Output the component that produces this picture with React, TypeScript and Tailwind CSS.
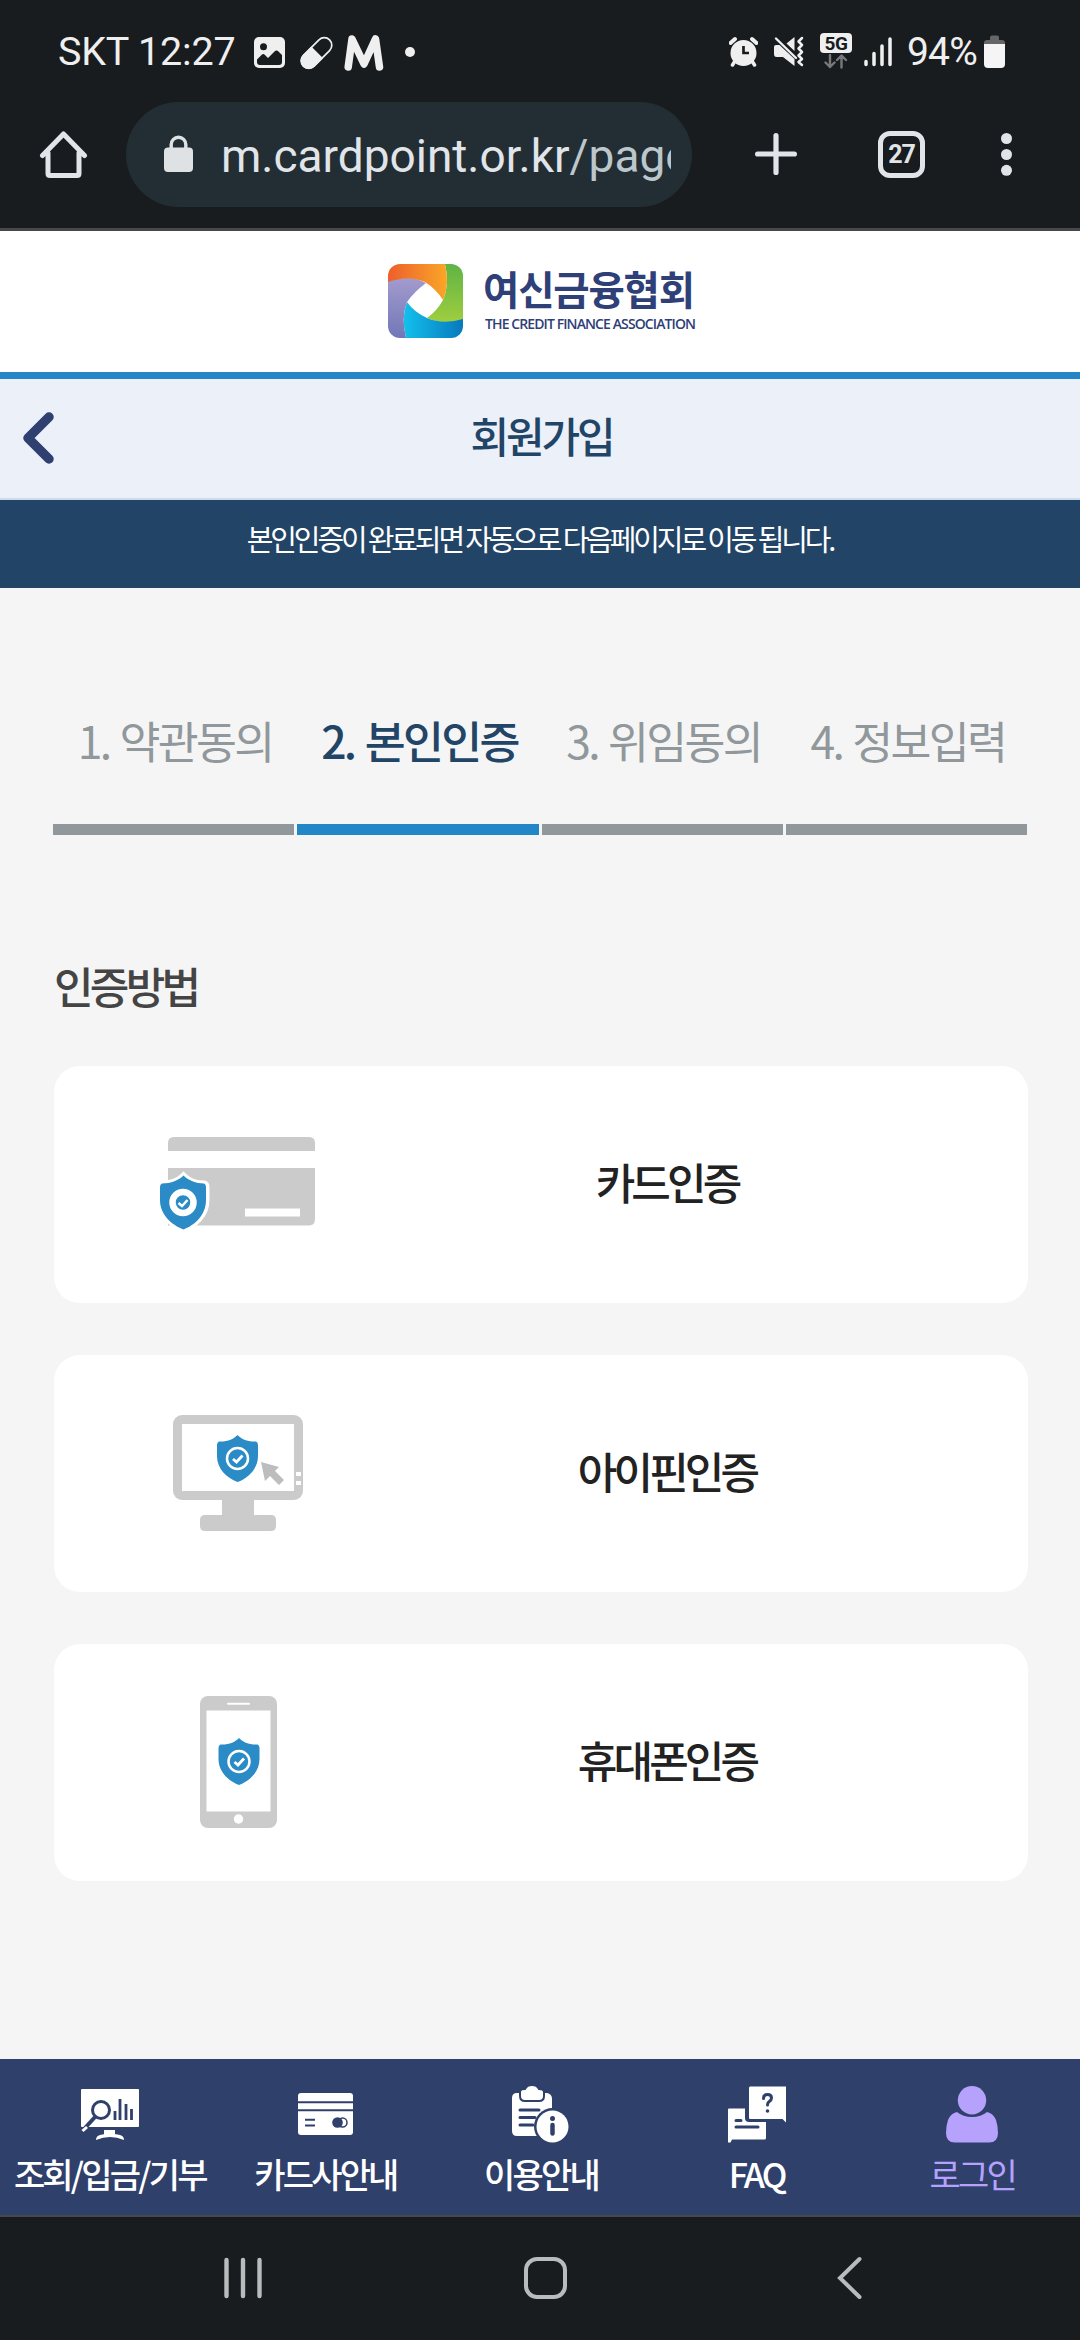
import React from "react";

const steps = [
  { label: "1. 약관동의", active: false },
  { label: "2. 본인인증", active: true },
  { label: "3. 위임동의", active: false },
  { label: "4. 정보입력", active: false },
];

const methods = [
  { label: "카드인증", Icon: CardIcon },
  { label: "아이핀인증", Icon: MonitorIcon },
  { label: "휴대폰인증", Icon: PhoneIcon },
];

const tabs = [
  { label: "조회/입금/기부", Icon: SearchTabIcon, active: false },
  { label: "카드사안내", Icon: CardTabIcon, active: false },
  { label: "이용안내", Icon: GuideTabIcon, active: false },
  { label: "FAQ", Icon: FaqTabIcon, active: false },
  { label: "로그인", Icon: UserTabIcon, active: true },
];

function StatusBar() {
  return (
    <div className="h-[102px] flex items-start pl-[58px] pr-[75px] text-[#efefef]">
      <span className="mt-[29px] w-[180px] whitespace-nowrap text-[39.5px] leading-[46px] tracking-[-0.2px]">SKT 12:27</span>
      <svg className="ml-[16px] mt-[37px]" width="31" height="31" viewBox="0 0 31 31">
        <rect width="31" height="31" rx="5" fill="#efefef" />
        <circle cx="9.5" cy="9.7" r="3.5" fill="#191c1f" />
        <path d="M3 22.5L8 17.5Q9.500 16.500 11 18L14 21L20.500 14.500Q22.500 12.500 24.500 14.500L28 18V25Q28 28 25 28H6Q3 28 3 25Z" fill="#191c1f" />
      </svg>
      <svg className="ml-[15px] mt-[36px]" width="33" height="34" viewBox="0 0 33 34">
        <g transform="rotate(45 16.5 17)">
          <rect x="9" y="-1.500" width="15" height="37" rx="7.500" fill="none" stroke="#efefef" strokeWidth="1.700" />
          <path d="M8.200 16H24.800V28A8.300 8.300 0 0 1 8.200 28Z" fill="#efefef" />
        </g>
      </svg>
      <svg className="ml-[11px] mt-[34px]" width="40" height="37" viewBox="0 0 40 37">
        <path d="M4.200 33L8 5L20 30L31.500 5L35.500 33" fill="none" stroke="#efefef" strokeWidth="7.500" strokeLinecap="round" strokeLinejoin="round" />
      </svg>
      <span className="ml-[21px] mt-[47px] size-[10px] rounded-full bg-[#efefef]" />

      <svg className="ml-auto mt-[36px]" width="29" height="31" viewBox="0 0 29 31" fill="none" stroke="#efefef">
        <circle cx="14.500" cy="17" r="13" fill="#efefef" stroke="none" />
        <path d="M1.500 7L6 3M27.500 7L23 3" strokeWidth="4" strokeLinecap="round" />
        <path d="M6 25L3.500 29M23 25L25.500 29" strokeWidth="3.500" strokeLinecap="round" />
        <path d="M14.500 10V17H20" stroke="#191c1f" strokeWidth="2.700" />
      </svg>
      <svg className="ml-[16px] mt-[36px]" width="30" height="31" viewBox="0 0 30 31">
        <path d="M20.500 1V15L12.500 7.500ZM0 11Q0 9 2 9H5.500L20.500 23V30L9 21H2.500Q0 21 0 18Z" fill="#efefef" />
        <path d="M2 2.500L22 22" stroke="#efefef" strokeWidth="2.400" strokeLinecap="round" />
        <path d="M28 2L24.500 5.500L28 9L24.500 12.500L28 16L24.500 19.500L28 23L24.500 26L28 29" fill="none" stroke="#efefef" strokeWidth="2.500" strokeLinecap="round" strokeLinejoin="round" />
      </svg>
      <div className="ml-[16px] mt-[33px] flex flex-col items-center">
        <span className="h-[20px] w-[32px] rounded-[4px] bg-[#efefef] text-center text-[19px] font-bold leading-[21px] tracking-[-0.5px] text-[#191c1f]">5G</span>
        <svg className="mt-px" width="24" height="15" viewBox="0 0 24 15" fill="none" stroke="#77797b" strokeWidth="2.400" strokeLinecap="round" strokeLinejoin="round">
          <path d="M6 1V13M1.500 8.500L6 13L10.500 8.500M17.500 13.500V2M13 6L17.500 1.500L22 6" />
        </svg>
      </div>
      <svg className="ml-[12px] mt-[36px]" width="28" height="31" viewBox="0 0 28 31" stroke="#efefef" strokeWidth="3.500" strokeLinecap="round">
        <path d="M2 25.500V28.500M10 17.500V28.500M18 10V28.500M26 3V28.500" />
      </svg>
      <span className="ml-[15px] mt-[29px] w-[72px] whitespace-nowrap text-[39px] leading-[46px] tracking-[-0.800px]">94%</span>
      <svg className="ml-[5px] mt-[35px]" width="21" height="33" viewBox="0 0 21 33">
        <path d="M0 9V8Q0 5 3 5H6V2.500Q6 .5 8 .5H13Q15 .5 15 2.500V5H18Q21 5 21 8V9Z" fill="#646668" />
        <path d="M0 9H21V29Q21 33 17 33H4Q0 33 0 29Z" fill="#f5f5f5" />
      </svg>
    </div>
  );
}

function AddressBar() {
  return (
    <div className="h-[129px] flex items-start border-b-[3px] border-[#47484b] text-[#e1e5e9]">
      <svg className="ml-[39px] mt-[28px] shrink-0" width="49" height="49" viewBox="0 0 49 49" fill="none" stroke="#e1e5e9" strokeWidth="5" strokeLinecap="round" strokeLinejoin="round">
        <path d="M3.500 25.500L24.500 4L45.500 25.500M9 23V43.500Q9 45.500 11 45.500H38Q40 45.500 40 43.500V23" />
      </svg>
      <div className="ml-[38px] h-[105px] w-[566px] rounded-full bg-[#222e33] flex items-start shrink-0">
        <svg className="ml-[38px] mt-[33px] shrink-0" width="29" height="37" viewBox="0 0 29 37">
          <rect y="12.500" width="29" height="24.500" rx="4" fill="#dfe2e4" />
          <path d="M7.200 14V9.500A7.300 7.300 0 0 1 21.800 9.500V14" fill="none" stroke="#dfe2e4" strokeWidth="3.400" />
        </svg>
        <span className="ml-[28px] mt-[25px] h-[64px] w-[450px] overflow-hidden whitespace-nowrap text-[46px] leading-[58px]">
          m.cardpoint.or.kr<span className="text-[#bcc7cd]">/page</span>
        </span>
      </div>
      <svg className="ml-[63px] mt-[31px] shrink-0" width="42" height="42" viewBox="0 0 42 42" stroke="#e1e5e9" strokeWidth="5.200" strokeLinecap="round">
        <path d="M21 2.600V39.400M2.600 21H39.400" />
      </svg>
      <span className="ml-[81px] mt-[29px] h-[47px] w-[47px] shrink-0 rounded-[12px] border-[5px] border-[#e1e5e9] text-center text-[25px] font-bold leading-[37px] tracking-[-1px]">27</span>
      <svg className="ml-[76px] mt-[31px] shrink-0" width="11" height="43" viewBox="0 0 11 43" fill="#e1e5e9">
        <circle cx="5.500" cy="5.500" r="5.500" />
        <circle cx="5.500" cy="21.500" r="5.500" />
        <circle cx="5.500" cy="37.300" r="5.500" />
      </svg>
    </div>
  );
}

function Logo() {
  return (
    <div className="h-[148px] bg-white border-b-[7px] border-[#2387c7] flex items-start">
      <svg className="ml-[388px] mt-[33px] shrink-0" width="75" height="74" viewBox="0 0 75 74">
        <defs>
          <linearGradient id="orange" x1="0" x2="1"><stop stopColor="#ed5f2c" /><stop offset="1" stopColor="#faa628" /></linearGradient>
          <linearGradient id="green" x1="0" y1="0" x2="0" y2="1"><stop stopColor="#5eb445" /><stop offset="1" stopColor="#a0ce3e" /></linearGradient>
          <linearGradient id="cyan" x1="0" x2="1"><stop stopColor="#13c0ec" /><stop offset="1" stopColor="#0779bd" /></linearGradient>
          <linearGradient id="violet" x1="0" y1="0" x2="0" y2="1"><stop stopColor="#a39bce" /><stop offset="1" stopColor="#7177b7" /></linearGradient>
          <clipPath id="mark"><rect width="75" height="74" rx="12" /></clipPath>
        </defs>
        <g clipPath="url(#mark)">
          <rect width="75" height="74" fill="#fff" />
          <path d="M57 0H75V56Q57 62 39 54Q49 47 55 36Q62 20 57 0Z" fill="url(#green)" />
          <path d="M18 74Q13 53 19 38Q26 48 39 54Q55 61 75 55V74Z" fill="url(#cyan)" />
          <path d="M0 17Q22 10 38 19Q26 28 19 38Q13 53 18 74H0Z" fill="url(#violet)" />
          <path d="M0 0H57Q62 20 55 36Q48 25 37 18Q20 11 0 18Z" fill="url(#orange)" />
        </g>
      </svg>
      <div className="ml-[20px] mt-[33px] flex flex-col whitespace-nowrap text-[#2f4078]">
        <span className="font-['Noto_Sans_CJK_KR',sans-serif] text-[39.500px] font-bold leading-[48px] tracking-[-1.200px]">여신금융협회</span>
        <span className="ml-[2px] mt-[3px] font-['Open_Sans',sans-serif] text-[14px] font-semibold leading-[18px] tracking-[-0.900px]">THE CREDIT FINANCE ASSOCIATION</span>
      </div>
    </div>
  );
}

function ShieldBadge() {
  return (
    <>
      <path d="M20.500 0C24 4 31 7 39 6.500Q41 7 41 10V21C41 34 31 43 20.500 47C10 43 0 34 0 21V10Q0 7 2 6.500C10 7 17 4 20.500 0Z" fill="#2a8bc7" />
      <circle cx="20.500" cy="23.500" r="10.500" fill="none" stroke="#fff" strokeWidth="2.500" />
      <path d="M16 24L19.500 27L25.500 20.500" fill="none" stroke="#fff" strokeWidth="2.800" />
    </>
  );
}

function CardIcon() {
  return (
    <svg className="-mt-[2px]" width="156" height="93" viewBox="0 0 156 93">
      <path d="M8 14V6Q8 0 14 0H149Q155 0 155 6V14ZM8 31H155V82Q155 88.500 149 88.500H8Z" fill="#cbcbcb" />
      <rect x="85" y="71.500" width="55" height="8" fill="#fff" />
      <path d="M23.500 38.500C28 43 36 46.500 44 46.500Q46.500 47 46.500 50V63C46.500 78 35 88 23.500 92.500C12 88 0 78 0 63V50Q0 47 2 46.500C11 46.500 19 43 23.500 38.500Z" fill="#fff" stroke="#fff" strokeWidth="6" />
      <path d="M23.500 38.500C28 43 36 46.500 44 46.500Q46 47 46 50V63C46 78 35 88 23.500 92.500C12 88 0 78 0 63V50Q0 47 2 46.500C11 46.500 19 43 23.500 38.500Z" fill="#2a8bc7" />
      <circle cx="23" cy="65.500" r="10.500" fill="none" stroke="#fff" strokeWidth="6.500" />
      <path d="M18.500 66L22 69L27.500 63" fill="none" stroke="#fff" strokeWidth="2.500" />
    </svg>
  );
}

function MonitorIcon() {
  return (
    <svg width="130" height="116" viewBox="0 0 130 116">
      <rect width="130" height="85" rx="9" fill="#cbcbcb" />
      <rect x="9" y="9" width="112" height="67" fill="#fff" />
      <path d="M49 84H81V100H98Q103 100 103 105V111Q103 116 98 116H32Q27 116 27 111V105Q27 100 32 100H49Z" fill="#cbcbcb" />
      <path d="M123 57h5v4h-5zM123 66h5v4h-5z" fill="#fff" />
      <path d="M88 47L106 52L102 56L111 65L106 70L97 61L92 66Z" fill="#bdbdbd" />
      <g transform="translate(44 20)"><ShieldBadge /></g>
    </svg>
  );
}

function PhoneIcon() {
  return (
    <svg width="77" height="132" viewBox="0 0 77 132">
      <rect width="77" height="132" rx="8" fill="#cbcbcb" />
      <rect x="6.500" y="14.500" width="64" height="101" fill="#fff" />
      <path d="M28 7.700H49" stroke="#fff" strokeWidth="2" strokeLinecap="round" />
      <circle cx="38.500" cy="123" r="4.700" fill="#fff" />
      <g transform="translate(18.500 42)"><ShieldBadge /></g>
    </svg>
  );
}

function SearchTabIcon() {
  return (
    <svg width="58" height="51" viewBox="0 0 58 51">
      <rect width="58" height="38" rx="1" fill="#fff" />
      <path d="M23 41H34V46H23ZM15 51Q15 47 19 46Q29 43 39 46Q43 47 43 51Q29 45 15 51Z" fill="#fff" />
      <circle cx="20" cy="21" r="8.500" fill="none" stroke="#2f406b" strokeWidth="3" />
      <path d="M14 28L4 39" stroke="#2f406b" strokeWidth="4" />
      <path d="M6 38L1.500 42" stroke="#fff" strokeWidth="3" />
      <path d="M34 22V31M39 10V31M45 15V31M50.500 20V31" stroke="#2f406b" strokeWidth="2.800" />
    </svg>
  );
}

function CardTabIcon() {
  return (
    <svg width="55" height="42" viewBox="0 0 55 42">
      <rect width="55" height="42" rx="3" fill="#fff" />
      <path d="M0 9.300H55M0 17.300H55M7 26.700H17M7 32.500H17" stroke="#2f406b" strokeWidth="2" />
      <circle cx="39.500" cy="29.500" r="5.300" fill="#2f406b" />
      <circle cx="44.500" cy="29.500" r="4.500" fill="none" stroke="#2f406b" strokeWidth="1.500" />
    </svg>
  );
}

function GuideTabIcon() {
  return (
    <svg width="57" height="58" viewBox="0 0 57 58">
      <path d="M5 8H35Q40 9 40 14V28L30 51H5Q0 51 0 46V13Q0 8 5 8Z" fill="#fff" />
      <path d="M8 6Q9 4 13 4Q15 0 20 0Q25 0 27 4Q32 4 32 7V11Q32 16 27 16H13Q8 16 8 11Z" fill="#fff" stroke="#2f406b" strokeWidth="2" />
      <path d="M8 25H27M8 32.500H23M8 40H21" stroke="#2f406b" strokeWidth="3" strokeLinecap="round" />
      <circle cx="40.500" cy="41.500" r="18.500" fill="#2f406b" />
      <circle cx="40.500" cy="41.500" r="16" fill="#fff" />
      <circle cx="40.500" cy="33.500" r="2.500" fill="#2f406b" />
      <path d="M40.500 40V48.500" stroke="#2f406b" strokeWidth="4.500" strokeLinecap="round" />
    </svg>
  );
}

function FaqTabIcon() {
  return (
    <svg width="58" height="57" viewBox="0 0 58 57">
      <path d="M0 23.500Q0 22.500 1 22.500H17V32Q17 36 21 36H38V52Q38 53.500 36.500 53.500H4L2.500 56.500H0Z" fill="#fff" />
      <path d="M8 34.500H13M8 41H30" stroke="#2f406b" strokeWidth="3" strokeLinecap="round" />
      <path d="M22 .5H58V36.500L54.500 33H22Q21 33 21 32V1.500Z" fill="#fff" />
      <path d="M35.500 12.500Q35.500 8.500 39.500 8.500Q43.500 8.500 43.500 12Q43.500 14 41 15.700Q39.500 17 39.500 19" fill="none" stroke="#2f406b" strokeWidth="3" strokeLinecap="round" />
      <circle cx="39.500" cy="25" r="1.800" fill="#2f406b" />
    </svg>
  );
}

function UserTabIcon() {
  return (
    <svg width="52" height="57" viewBox="0 0 52 57" fill="#b6a1fd">
      <circle cx="26" cy="14.200" r="14.200" />
      <path d="M11 26Q17 31 26 31Q35 31 41 26Q47 27 50 34Q52 40 52 47Q52 56.500 43 56.500H9Q0 56.500 0 47Q0 40 2 34Q5 27 11 26Z" />
    </svg>
  );
}

export default function App() {
  return (
    <div className="flex h-[2340px] w-[1080px] flex-col overflow-hidden bg-[#f5f5f5] font-['Noto_Sans_CJK_KR',sans-serif]">
      <header className="bg-[#191c1f] font-[Roboto,sans-serif]">
        <StatusBar />
        <AddressBar />
      </header>
      <Logo />

      {/* page title */}
      <div className="grid h-[121px] grid-cols-3 items-center border-b-2 border-[#cbdbe9] bg-[#ebf0f9]">
        <svg className="ml-[21px] mt-[-1px]" width="35" height="54" viewBox="0 0 35 54" fill="none" stroke="#2f4070" strokeWidth="9.500" strokeLinecap="round" strokeLinejoin="round">
          <path d="M28 6L7 27L28 48" />
        </svg>
        <h1 className="pb-[7px] pl-[3px] text-center text-[42px] leading-[60px] tracking-[-3.200px] text-[#224466] font-medium">회원가입</h1>
      </div>
      <p className="h-[88px] whitespace-nowrap bg-[#224466] text-center text-[29px] leading-[77px] tracking-[-3.150px] text-white">
        본인인증이 완료되면 자동으로 다음페이지로 이동 됩니다.
      </p>

      <main className="flex-1 px-[54px]">
        <ol className="-mx-px grid grid-cols-4 gap-[3px] pt-[122px]">
          {steps.map((s) => (
            <li
              key={s.label}
              className={`h-[125px] whitespace-nowrap border-b-[11px] pl-[3px] text-center text-[44.500px] leading-[60px] tracking-[-2.700px] [word-spacing:3px] ${
                s.active ? "border-[#2387c7] text-[#224466] font-medium" : "border-[#91989c] text-[#91989c]"
              }`}
            >
              {s.label}
            </li>
          ))}
        </ol>

        <h2 className="mt-[120px] text-[43px] leading-[60px] tracking-[-3.700px] text-[#444] font-medium">인증방법</h2>
        <ul className="mt-[51px] flex flex-col gap-[52.500px]">
          {methods.map(({ label, Icon }) => (
            <li key={label} className="flex h-[236.500px] w-[974px] items-center rounded-[26px] bg-white">
              <div className="flex w-[368px] justify-center">
                <Icon />
              </div>
              <span className="w-[490px] pb-[7px] text-center text-[43px] leading-[60px] tracking-[-3.900px] text-[#222] font-medium">{label}</span>
            </li>
          ))}
        </ul>
      </main>

      <nav className="grid h-[158px] grid-cols-5 border-b-2 border-[#47484b] bg-[#2f406b] pl-[2px]">
        {tabs.map(({ label, Icon, active }) => (
          <a
            key={label}
            className={`flex flex-col items-center whitespace-nowrap text-[34px] leading-[44px] tracking-[-2.800px] ${
              active ? "text-[#b6a1fd]" : "text-white font-medium"
            }`}
          >
            <span className="mt-[26px] mb-[9px] flex h-[58px] items-center">
              <Icon />
            </span>
            {label}
          </a>
        ))}
      </nav>

      {/* system navigation */}
      <div className="flex h-[123px] items-start bg-[#191c1f] pt-[38px] pl-[223px]">
        <svg width="40" height="46" viewBox="0 0 40 46" stroke="#b9bbbd" strokeWidth="4.400" strokeLinecap="round">
          <path d="M3.500 5V41M20 5V41M36.500 5V41" />
        </svg>
        <span className="ml-[261px] mt-[2px] h-[42px] w-[43px] rounded-[13px] border-[4px] border-[#b9bbbd]" />
        <svg className="ml-[270px]" width="28" height="46" viewBox="0 0 28 46" fill="none" stroke="#b9bbbd" strokeWidth="4" strokeLinecap="round">
          <path d="M22.500 4L3 23L22.500 42" />
        </svg>
      </div>
    </div>
  );
}
